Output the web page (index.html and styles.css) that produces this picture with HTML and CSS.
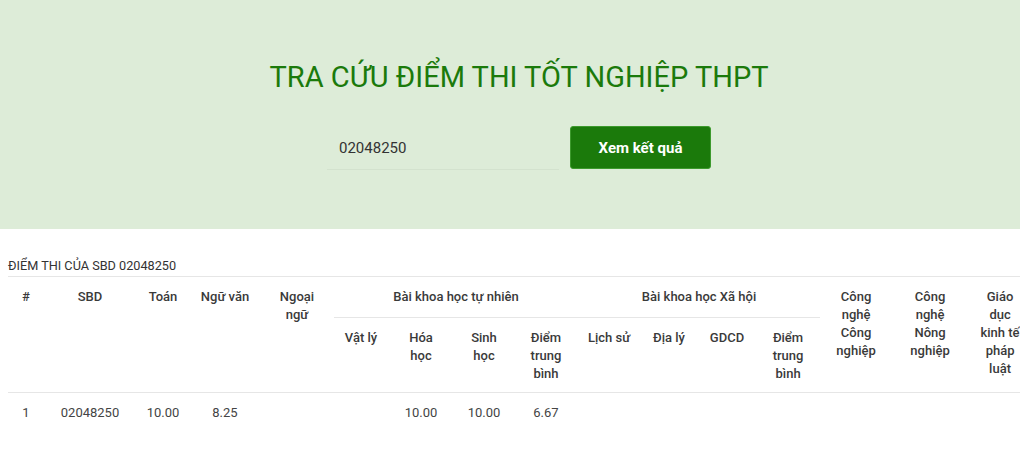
FILE: index.html
```html
<!DOCTYPE html>
<html lang="vi">
<head>
    <meta charset="UTF-8">
    <meta name="viewport" content="width=device-width, initial-scale=1.0">
    <title>Tra cứu điểm thi tốt nghiệp THPT</title>
    <link rel="stylesheet" href="styles.css">
</head>
<body>
    <div class="search-banner">
        <h1>TRA CỨU ĐIỂM THI TỐT NGHIỆP THPT</h1>
        <form class="search-form">
            <input type="text" class="search-input" value="02048250">
            <button type="button" class="search-btn">Xem kết quả</button>
        </form>
    </div>

    <div class="result">
        <div class="result-title">ĐIỂM THI CỦA SBD 02048250</div>
        <table class="score-table">
            <colgroup>
                <col class="c-36"><col class="c-92"><col class="c-54"><col class="c-70"><col class="c-74">
                <col class="c-54"><col class="c-66"><col class="c-60"><col class="c-64">
                <col class="c-62"><col class="c-58"><col class="c-58"><col class="c-64">
                <col class="c-72"><col class="c-76"><col class="c-64">
            </colgroup>
            <thead>
                <tr>
                    <th rowspan="2">#</th>
                    <th rowspan="2">SBD</th>
                    <th rowspan="2">Toán</th>
                    <th rowspan="2">Ngữ văn</th>
                    <th rowspan="2">Ngoại ngữ</th>
                    <th colspan="4" class="group">Bài khoa học tự nhiên</th>
                    <th colspan="4" class="group">Bài khoa học Xã hội</th>
                    <th rowspan="2">Công nghệ Công nghiệp</th>
                    <th rowspan="2">Công nghệ Nông nghiệp</th>
                    <th rowspan="2">Giáo dục kinh tế pháp luật</th>
                </tr>
                <tr>
                    <th>Vật lý</th>
                    <th>Hóa học</th>
                    <th>Sinh học</th>
                    <th>Điểm trung bình</th>
                    <th class="nowrap">Lịch sử</th>
                    <th>Địa lý</th>
                    <th>GDCD</th>
                    <th>Điểm trung bình</th>
                </tr>
            </thead>
            <tbody>
                <tr>
                    <td>1</td>
                    <td>02048250</td>
                    <td>10.00</td>
                    <td>8.25</td>
                    <td></td>
                    <td></td>
                    <td>10.00</td>
                    <td>10.00</td>
                    <td>6.67</td>
                    <td></td>
                    <td></td>
                    <td></td>
                    <td></td>
                    <td></td>
                    <td></td>
                    <td></td>
                </tr>
            </tbody>
        </table>
    </div>
</body>
</html>
```

FILE: styles.css
```css
:root {
    --green: #1b7a0b;
    --banner: #ddecd8;
    --line: #e6e6e6;
    --text: #333;
}

* {
    margin: 0;
    padding: 0;
    box-sizing: border-box;
}

body {
    font-family: Roboto, 'Liberation Sans', sans-serif;
    color: var(--text);
    background: white;
    overflow: hidden;
}

.search-banner {
    background: var(--banner);
    height: 229px;
    padding: 57px 0 0 18px;
    text-align: center;
}

.search-banner h1 {
    font-size: 29px;
    font-weight: 400;
    line-height: 40px;
    color: var(--green);
}

.search-form {
    display: flex;
    justify-content: center;
    align-items: flex-start;
    gap: 11px;
    margin-top: 29px;
}

.search-input {
    width: 232px;
    height: 44px;
    padding: 0 12px;
    border: none;
    border-bottom: 1px solid #d3e2ce;
    background: transparent;
    font-family: inherit;
    font-size: 15px;
    color: #333;
    outline: none;
}

.search-btn {
    width: 141px;
    height: 43px;
    background: var(--green);
    border: 1px solid #3d9a2d;
    border-radius: 3px;
    color: white;
    font-family: inherit;
    font-size: 15px;
    font-weight: 700;
}

.result {
    padding: 28px 8px 0;
}

.result-title {
    font-size: 12.7px;
    line-height: 18px;
    color: #333;
    padding-bottom: 1px;
}

.score-table {
    border-collapse: collapse;
    table-layout: fixed;
    width: 1024px;
    border-top: 1px solid var(--line);
    font-size: 13px;
    line-height: 18px;
}

.score-table th,
.score-table td {
    text-align: center;
    padding: 11px 10px 9px;
}

.score-table th {
    font-weight: 500;
    vertical-align: top;
    color: #3a3a3a;
}

.score-table th.nowrap {
    white-space: nowrap;
}

.score-table td {
    color: #444;
    padding-bottom: 10px;
}

.score-table thead {
    border-bottom: 1px solid var(--line);
}

.score-table th.group {
    border-bottom: 1px solid var(--line);
    padding-bottom: 11px;
}

.c-36 { width: 36px; }
.c-54 { width: 54px; }
.c-58 { width: 58px; }
.c-60 { width: 60px; }
.c-62 { width: 62px; }
.c-64 { width: 64px; }
.c-66 { width: 66px; }
.c-70 { width: 70px; }
.c-72 { width: 72px; }
.c-74 { width: 74px; }
.c-76 { width: 76px; }
.c-92 { width: 92px; }
```
